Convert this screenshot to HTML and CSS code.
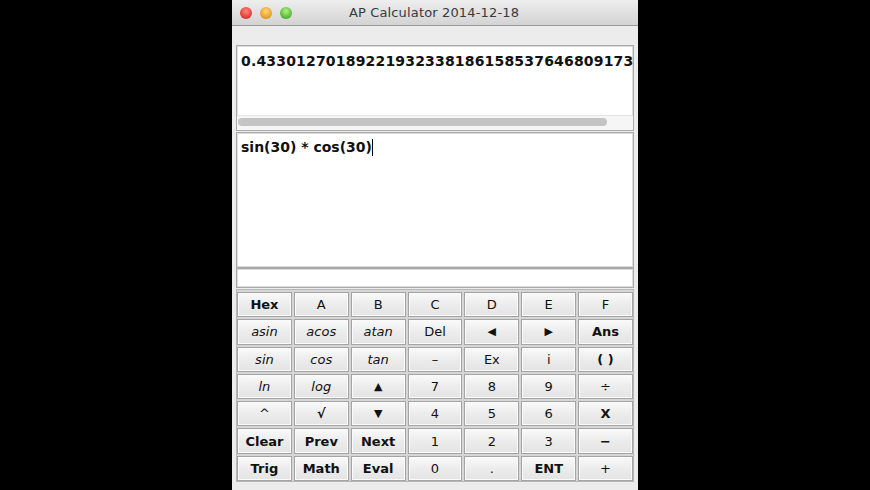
FILE: index.html
```html
<!DOCTYPE html>
<html lang="en">
<head>
    <meta charset="UTF-8">
    <title>AP Calculator 2014-12-18</title>
    <link rel="stylesheet" href="styles.css">
</head>
<body>
    <div class="window">
        <div class="titlebar">
            <div class="lights">
                <span class="light red"></span>
                <span class="light yellow"></span>
                <span class="light green"></span>
            </div>
            <div class="title">AP Calculator 2014-12-18</div>
        </div>
        <div class="content">
            <div class="result">
                <div class="result-text">0.43301270189221932338186158537646809173</div>
                <div class="scroll"><div class="thumb"></div></div>
            </div>
            <div class="input">sin(30) * cos(30)<span class="caret"></span></div>
            <div class="status"></div>
            <div class="buttons">
                <button class="button bold">Hex</button>
                <button class="button">A</button>
                <button class="button">B</button>
                <button class="button">C</button>
                <button class="button">D</button>
                <button class="button">E</button>
                <button class="button">F</button>

                <button class="button func">asin</button>
                <button class="button func">acos</button>
                <button class="button func">atan</button>
                <button class="button">Del</button>
                <button class="button arrow">&#9664;</button>
                <button class="button arrow">&#9654;</button>
                <button class="button bold">Ans</button>

                <button class="button func">sin</button>
                <button class="button func">cos</button>
                <button class="button func">tan</button>
                <button class="button">&ndash;</button>
                <button class="button">Ex</button>
                <button class="button">i</button>
                <button class="button bold">( )</button>

                <button class="button func">ln</button>
                <button class="button func">log</button>
                <button class="button arrow">&#9650;</button>
                <button class="button">7</button>
                <button class="button">8</button>
                <button class="button">9</button>
                <button class="button">&divide;</button>

                <button class="button">^</button>
                <button class="button bold">&radic;</button>
                <button class="button arrow">&#9660;</button>
                <button class="button">4</button>
                <button class="button">5</button>
                <button class="button">6</button>
                <button class="button bold">X</button>

                <button class="button bold">Clear</button>
                <button class="button bold">Prev</button>
                <button class="button bold">Next</button>
                <button class="button">1</button>
                <button class="button">2</button>
                <button class="button">3</button>
                <button class="button bold">&minus;</button>

                <button class="button bold">Trig</button>
                <button class="button bold">Math</button>
                <button class="button bold">Eval</button>
                <button class="button">0</button>
                <button class="button">.</button>
                <button class="button bold">ENT</button>
                <button class="button">+</button>
            </div>
        </div>
    </div>
</body>
</html>
```

FILE: styles.css
```css
body {
    margin: 0;
    background-color: #000;
    font-family: "DejaVu Sans", sans-serif;
}
.window {
    width: 406px;
    height: 490px;
    margin-left: 232px;
    background-color: #ececec;
    overflow: hidden;
}
.titlebar {
    position: relative;
    height: 25px;
    background: linear-gradient(#eeeeee, #d3d3d3);
    border-bottom: 1px solid #9a9a9a;
    display: flex;
    align-items: center;
    justify-content: center;
}
.lights {
    position: absolute;
    left: 8px;
    top: 7px;
    display: flex;
    gap: 8px;
}
.light {
    width: 12px;
    height: 12px;
    border-radius: 50%;
}
.light.red {
    background: radial-gradient(circle at 50% 35%, #ff8a80, #e0443a 60%, #b12a22);
}
.light.yellow {
    background: radial-gradient(circle at 50% 35%, #ffd580, #e9a52b 60%, #b97a14);
}
.light.green {
    background: radial-gradient(circle at 50% 35%, #b6f08a, #5cbf3b 60%, #3a8c22);
}
.title {
    font-size: 13px;
    color: #3a3a3a;
    margin-left: -2px;
    letter-spacing: 0.15px;
}
.content {
    padding: 19px 4px 0 4px;
}
.result {
    height: 84px;
    background-color: #fff;
    border: 1px solid #a9a9a9;
    box-shadow: inset 0 0 0 1px #dcdcdc;
    display: flex;
    flex-direction: column;
    overflow: hidden;
}
.result-text {
    padding: 7px 0 0 4px;
    font-size: 14px;
    font-weight: bold;
    letter-spacing: 0.18px;
    color: #111;
    white-space: nowrap;
    flex: 1;
}
.scroll {
    height: 12px;
    background-color: #f6f6f6;
    border-top: 1px solid #e6e6e6;
    padding: 2px 0 0 1px;
}
.thumb {
    width: 369px;
    height: 8px;
    border-radius: 4px;
    background-color: #c4c4c4;
}
.input {
    height: 128px;
    margin-top: 1px;
    background-color: #fff;
    border: 1px solid #a9a9a9;
    box-shadow: inset 0 0 0 1px #dcdcdc;
    padding: 6px 0 0 4px;
    font-size: 14px;
    font-weight: bold;
    color: #111;
}
.caret {
    display: inline-block;
    width: 1px;
    height: 17px;
    background-color: #000;
    vertical-align: -4px;
}
.status {
    height: 18px;
    background-color: #fff;
    border: 1px solid #a9a9a9;
    box-shadow: inset 0 0 0 1px #dcdcdc;
}
.buttons {
    display: grid;
    grid-template-columns: repeat(7, 1fr);
    grid-auto-rows: 25.3px;
    gap: 2px;
    padding: 2px 0 0 0;
    background-color: #d6d6d6;
    border: 1px solid #b8b8b8;
    margin-top: 1px;
}
.button {
    margin: 0;
    padding: 0;
    border: 1px solid #a4a4a4;
    box-shadow: inset 0 0 0 1px #fbfbfb;
    background: linear-gradient(#fafafa, #ececec 50%, #e4e4e4);
    font-family: "DejaVu Sans", sans-serif;
    font-size: 13px;
    color: #111;
    cursor: pointer;
}
.button.bold {
    font-weight: bold;
}
.button.func {
    font-style: italic;
}
.button.arrow {
    font-size: 11px;
}
.button:hover {
    background: #e0e0e0;
}
```
